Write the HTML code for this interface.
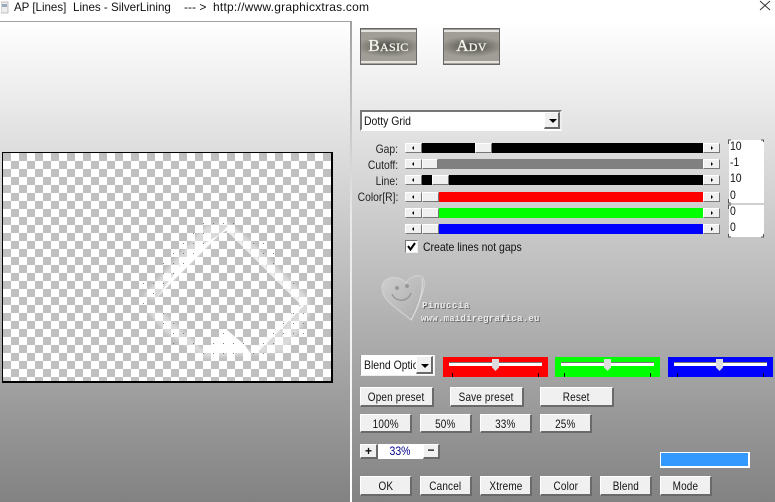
<!DOCTYPE html>
<html><head><meta charset="utf-8"><style>
html,body{margin:0;padding:0}
body{width:775px;height:502px;position:relative;overflow:hidden;background:#fff;font-family:"Liberation Sans",sans-serif;font-size:12px;color:#000}
.a{position:absolute;box-sizing:border-box}
.t{position:absolute;white-space:nowrap;line-height:14px}
.n{transform:scaleX(.87);transform-origin:0 0;color:#111}
.btn{position:absolute;box-sizing:border-box;background:#f0f0f0;border-top:1px solid #fff;border-left:1px solid #fff;border-right:2px solid #6a6a6a;border-bottom:2px solid #6a6a6a;text-align:center;font-size:12px;color:#111;white-space:nowrap}
.btn span{display:inline-block;transform:scaleX(.83);margin:0 -10px;letter-spacing:.2px}
.sb{position:absolute;box-sizing:border-box;height:10px;background:#f0f0f0;border-top:1px solid #fff;border-left:1px solid #fff;border-right:1px solid #777;border-bottom:1px solid #777}
.ar{position:absolute;width:0;height:0;top:2px;border-top:2px solid transparent;border-bottom:2px solid transparent}
.ar.l{left:6px;border-right:2px solid #000}
.ar.r{left:7px;border-left:2px solid #000}
.lb{position:absolute;right:377px;text-align:right;line-height:14px;color:#222;transform:scaleX(.86);transform-origin:100% 0;white-space:nowrap}
.sq{position:absolute;box-sizing:border-box;height:20px}
.tr{position:absolute;height:3px;background:#fff;border-top:1px solid #777;box-sizing:content-box}
.th{position:absolute;width:7px;height:12px;background:#ddd;clip-path:polygon(0 0,100% 0,100% 70%,50% 100%,0 70%)}
.tk{position:absolute;width:1px;height:4px;background:#000}
.tag{position:absolute;box-sizing:border-box;width:57px;height:37px;border:1px solid #666;background:radial-gradient(ellipse 60% 30% at 50% 50%,#55554f 15%,#8c8a82 75%,#a09e96 100%);color:#f4f2ec;text-align:center;font-family:"Liberation Serif",serif;font-variant:small-caps;font-size:17px;line-height:33px;letter-spacing:.3px;-webkit-text-stroke:.35px #f4f2ec}
.tag:before,.tag:after{content:"";position:absolute;left:0;right:0;height:2px;background:#e4e3df}
.tag:before{top:1px}.tag:after{bottom:1px}
</style></head><body>
<div class="a" style="left:0;top:22px;width:775px;height:480px;background:linear-gradient(#fff,#828282)"></div>
<div class="a" style="left:0;top:21px;width:351px;height:1px;background:#a0a0a0"></div>
<div class="a" style="left:350px;top:21px;width:2px;height:481px;background:linear-gradient(#a0a0a0,#e8e8e8 40%,#fff)"></div>

<svg class="a" style="left:1px;top:1px" width="11" height="14"><rect x="0" y="1" width="7" height="11" fill="#eee" stroke="#aaa" stroke-width=".7"/><rect x="1" y="3" width="5" height="3" fill="#9ab"/></svg>
<div class="t" style="left:14px;top:1px;line-height:13px;color:#111;transform:scaleX(.96);transform-origin:0 0">AP [Lines]</div>
<div class="t" style="left:73px;top:1px;line-height:13px;color:#111;transform:scaleX(.965);transform-origin:0 0">Lines - SilverLining</div>
<div class="t" style="left:184px;top:1px;line-height:13px;color:#111">--- &gt;</div>
<div class="t" style="left:213px;top:1px;line-height:13px;color:#111;letter-spacing:.23px">http://www.graphicxtras.com</div>
<svg class="a" style="left:759px;top:0" width="12" height="11"><path d="M1 1L11 10M11 1L1 10" stroke="#333" fill="none"/></svg>

<!-- Preview -->
<div class="a" style="left:2px;top:152px;width:331px;height:231px;border:1px solid #000;border-width:1px 2px 2px 1px;background-color:#fff;background-image:conic-gradient(#fff 25%,#c0c0c0 0 50%,#fff 0 75%,#c0c0c0 0);background-size:16px 16px;background-position:0 0"></div>
<svg class="a" style="left:0;top:0" width="340" height="390">
<defs><filter id="b" x="-20%" y="-20%" width="140%" height="140%"><feGaussianBlur stdDeviation="1.6"/></filter>
<filter id="c" x="-10%" y="-30%" width="120%" height="160%"><feGaussianBlur stdDeviation=".35"/></filter></defs>
<g fill="#fff" fill-opacity=".42" filter="url(#b)">
<polygon points="143,296 205,226 228,222 250,240 309,298 309,316 285,352 205,358 165,332 148,312 163,312 203,350 257,350 303,305 228,228 155,300"/>
</g>
<g fill="#fff">
<polygon points="153,301 227,227 229,229 190,252 161,292"/>
<polygon points="228,228 303,303 302,306 226,230" fill-opacity=".7"/>
<polygon points="303,303 304,306 257,353 253,351" fill-opacity=".85"/>
<polygon points="203,353 227,330 245,345 250,353"/>
</g>
<path fill="#555" fill-opacity=".75" d="M203 223h1v1h-1zM213 223h1v1h-1zM223 223h1v1h-1zM233 223h1v1h-1zM193 233h1v1h-1zM203 233h1v1h-1zM183 243h1v1h-1zM193 243h1v1h-1zM203 243h1v1h-1zM253 243h1v1h-1zM263 243h1v1h-1zM173 253h1v1h-1zM183 253h1v1h-1zM193 253h1v1h-1zM263 253h1v1h-1zM273 253h1v1h-1zM163 263h1v1h-1zM173 263h1v1h-1zM183 263h1v1h-1zM273 263h1v1h-1zM163 273h1v1h-1zM173 273h1v1h-1zM143 283h1v1h-1zM153 283h1v1h-1zM163 283h1v1h-1zM293 283h1v1h-1zM153 293h1v1h-1zM143 303h1v1h-1zM163 313h1v1h-1zM293 313h1v1h-1zM303 313h1v1h-1zM163 323h1v1h-1zM173 323h1v1h-1zM283 323h1v1h-1zM293 323h1v1h-1zM303 323h1v1h-1zM173 333h1v1h-1zM183 333h1v1h-1zM223 333h1v1h-1zM273 333h1v1h-1zM283 333h1v1h-1zM293 333h1v1h-1zM303 333h1v1h-1zM173 343h1v1h-1zM193 343h1v1h-1zM213 343h1v1h-1zM223 343h1v1h-1zM233 343h1v1h-1zM243 343h1v1h-1zM263 343h1v1h-1zM273 343h1v1h-1zM203 353h1v1h-1zM213 353h1v1h-1zM223 353h1v1h-1zM233 353h1v1h-1zM253 353h1v1h-1zM263 353h1v1h-1z"/>
</svg>

<!-- Tabs -->
<div class="tag" style="left:360px;top:28px">Basic</div>
<div class="tag" style="left:443px;top:28px">Adv</div>

<!-- Combo -->
<div class="a" style="left:360px;top:110px;width:202px;height:21px;background:#fff;border:2px solid;border-color:#777 #eee #fff #777"></div>
<div class="t n" style="left:364px;top:114px">Dotty Grid</div>
<div class="btn" style="left:544px;top:112px;width:16px;height:17px"></div>
<div class="a" style="left:549px;top:119px;border-top:4px solid #000;border-left:4px solid transparent;border-right:4px solid transparent;width:0;height:0"></div>

<!-- Labels -->
<div class="lb" style="top:142px">Gap:</div>
<div class="lb" style="top:158px">Cutoff:</div>
<div class="lb" style="top:174px">Line:</div>
<div class="lb" style="top:190px">Color[R]:</div>

<!-- Scrollbars -->
<div class="a" style="left:422px;top:143px;width:281px;height:10px;background:#000"></div>
<div class="sb" style="left:475px;top:143px;width:17px"></div>
<div class="a" style="left:422px;top:159px;width:281px;height:10px;background:#808080"></div>
<div class="sb" style="left:422px;top:159px;width:16px"></div>
<div class="a" style="left:422px;top:175px;width:281px;height:10px;background:#000"></div>
<div class="sb" style="left:432px;top:175px;width:17px"></div>
<div class="a" style="left:439px;top:192px;width:264px;height:10px;background:#f00"></div>
<div class="sb" style="left:422px;top:192px;width:17px"></div>
<div class="a" style="left:439px;top:208px;width:264px;height:10px;background:#0f0"></div>
<div class="sb" style="left:422px;top:208px;width:17px"></div>
<div class="a" style="left:439px;top:224px;width:264px;height:10px;background:#00f"></div>
<div class="sb" style="left:422px;top:224px;width:17px"></div>

<div class="sb" style="left:405px;top:143px;width:17px"><i class="ar l"></i></div><div class="sb" style="left:703px;top:143px;width:17px"><i class="ar r"></i></div>
<div class="sb" style="left:405px;top:159px;width:17px"><i class="ar l"></i></div><div class="sb" style="left:703px;top:159px;width:17px"><i class="ar r"></i></div>
<div class="sb" style="left:405px;top:175px;width:17px"><i class="ar l"></i></div><div class="sb" style="left:703px;top:175px;width:17px"><i class="ar r"></i></div>
<div class="sb" style="left:405px;top:192px;width:17px"><i class="ar l"></i></div><div class="sb" style="left:703px;top:192px;width:17px"><i class="ar r"></i></div>
<div class="sb" style="left:405px;top:208px;width:17px"><i class="ar l"></i></div><div class="sb" style="left:703px;top:208px;width:17px"><i class="ar r"></i></div>
<div class="sb" style="left:405px;top:224px;width:17px"><i class="ar l"></i></div><div class="sb" style="left:703px;top:224px;width:17px"><i class="ar r"></i></div>

<!-- Inputs -->
<div class="a" style="left:729px;top:140px;width:35px;height:63px;background:#fff"></div>
<div class="a" style="left:729px;top:205px;width:35px;height:32px;background:#fff"></div>
<svg class="a" style="left:727px;top:139px" width="39" height="100"><path d="M4 1H1.5V5M1.5 60V64H4M34 1H36.5V3M4 66H1.5V70M1.5 95V98H4M36.5 95V98H34" stroke="#555" fill="none"/></svg>
<div class="t n" style="left:730px;top:139px">10</div>
<div class="t n" style="left:730px;top:155px">-1</div>
<div class="t n" style="left:730px;top:171px">10</div>
<div class="t n" style="left:730px;top:188px">0</div>
<div class="t n" style="left:730px;top:204px">0</div>
<div class="t n" style="left:730px;top:220px">0</div>

<!-- Checkbox -->
<div class="a" style="left:405px;top:240px;width:13px;height:13px;background:#fff;border:1px solid #777;border-right-color:#eee;border-bottom-color:#eee"></div>
<svg class="a" style="left:405px;top:240px" width="13" height="13"><path d="M3 6L5.5 9.5L10 3" stroke="#000" stroke-width="2" fill="none"/></svg>
<div class="t n" style="left:423px;top:240px">Create lines not gaps</div>

<!-- Watermark -->
<svg class="a" style="left:378px;top:272px" width="170" height="54">
<defs><linearGradient id="h" x1="0" y1="0" x2="1" y2="1"><stop offset="0" stop-color="#cecece"/><stop offset="1" stop-color="#acacac"/></linearGradient></defs>
<path d="M33 48C22 38 5 30 4 17C3 8 12 4 20 6C24 7 26 9 28 11C31 5 39 2 44 5C49 9 45 20 42 28C39 36 37 42 33 48Z" fill="url(#h)" stroke="#d0d0d0" stroke-width="1.2"/>
<path d="M33 48C39 38 46 20 44 7" stroke="#e0e0e0" fill="none"/>
<circle cx="19" cy="16" r="2" fill="#989898"/><circle cx="29" cy="14" r="2" fill="#989898"/>
<path d="M14 22C18 31 30 30 33 21" stroke="#989898" stroke-width="1.5" fill="none"/>
<g filter="url(#c)" font-family="Liberation Mono,monospace" font-size="9" font-weight="bold">
<text x="45" y="37" fill="#6a6a6a" letter-spacing=".6">Pinuccia</text>
<text x="44" y="36" fill="#ececec" letter-spacing=".6">Pinuccia</text>
<text x="44" y="50" fill="#6a6a6a" letter-spacing=".25">www.maidiregrafica.eu</text>
<text x="43" y="49" fill="#ececec" letter-spacing=".25">www.maidiregrafica.eu</text>
</g>
</svg>

<!-- Blend -->
<div class="a" style="left:360px;top:355px;width:75px;height:21px;background:#fff;border-right:1px solid #eee;border-bottom:1px solid #eee;border-left:1px solid #999"></div>
<div class="t n" style="left:364px;top:358px;width:60px;overflow:hidden">Blend Options</div>
<div class="btn" style="left:416px;top:356px;width:17px;height:18px"></div>
<div class="a" style="left:421px;top:364px;border-top:4px solid #000;border-left:4px solid transparent;border-right:4px solid transparent;width:0;height:0"></div>

<div class="sq" style="left:443px;top:357px;width:105px;background:#f00"></div>
<div class="sq" style="left:555px;top:357px;width:105px;background:#0f0"></div>
<div class="sq" style="left:668px;top:357px;width:105px;background:#00f"></div>
<div class="tr" style="left:449px;top:362px;width:93px"></div>
<div class="tr" style="left:561px;top:362px;width:93px"></div>
<div class="tr" style="left:674px;top:362px;width:93px"></div>
<div class="th" style="left:492px;top:359px"></div>
<div class="th" style="left:604px;top:359px"></div>
<div class="th" style="left:716px;top:359px"></div>
<div class="tk" style="left:452px;top:373px"></div><div class="tk" style="left:538px;top:373px"></div>
<div class="tk" style="left:564px;top:373px"></div><div class="tk" style="left:650px;top:373px"></div>
<div class="tk" style="left:677px;top:373px"></div><div class="tk" style="left:763px;top:373px"></div>

<!-- Buttons -->
<div class="btn" style="left:360px;top:387px;width:74px;height:20px;line-height:19px"><span>Open preset</span></div>
<div class="btn" style="left:450px;top:387px;width:74px;height:20px;line-height:19px"><span>Save preset</span></div>
<div class="btn" style="left:540px;top:387px;width:74px;height:20px;line-height:19px"><span>Reset</span></div>
<div class="btn" style="left:360px;top:414px;width:52px;height:19px;line-height:18px"><span>100%</span></div>
<div class="btn" style="left:420px;top:414px;width:52px;height:19px;line-height:18px"><span>50%</span></div>
<div class="btn" style="left:480px;top:414px;width:52px;height:19px;line-height:18px"><span>33%</span></div>
<div class="btn" style="left:540px;top:414px;width:52px;height:19px;line-height:18px"><span>25%</span></div>

<div class="btn" style="left:360px;top:444px;width:18px;height:15px;line-height:12px;font-weight:bold">+</div>
<div class="a" style="left:378px;top:444px;width:45px;height:15px;background:#fff;color:#00008b;text-align:center;line-height:14px"><span style="display:inline-block;transform:scaleX(.87)">33%</span></div>
<div class="btn" style="left:423px;top:444px;width:17px;height:15px;line-height:11px;font-weight:bold">−</div>

<div class="a" style="left:660px;top:452px;width:90px;height:16px;background:#3399ff;border:1px solid #fff;border-width:1px 2px 2px 1px"></div>

<div class="btn" style="left:360px;top:476px;width:52px;height:20px;line-height:19px"><span>OK</span></div>
<div class="btn" style="left:420px;top:476px;width:52px;height:20px;line-height:19px"><span>Cancel</span></div>
<div class="btn" style="left:480px;top:476px;width:52px;height:20px;line-height:19px"><span>Xtreme</span></div>
<div class="btn" style="left:540px;top:476px;width:52px;height:20px;line-height:19px"><span>Color</span></div>
<div class="btn" style="left:600px;top:476px;width:52px;height:20px;line-height:19px"><span>Blend</span></div>
<div class="btn" style="left:660px;top:476px;width:52px;height:20px;line-height:19px"><span>Mode</span></div>
</body></html>
